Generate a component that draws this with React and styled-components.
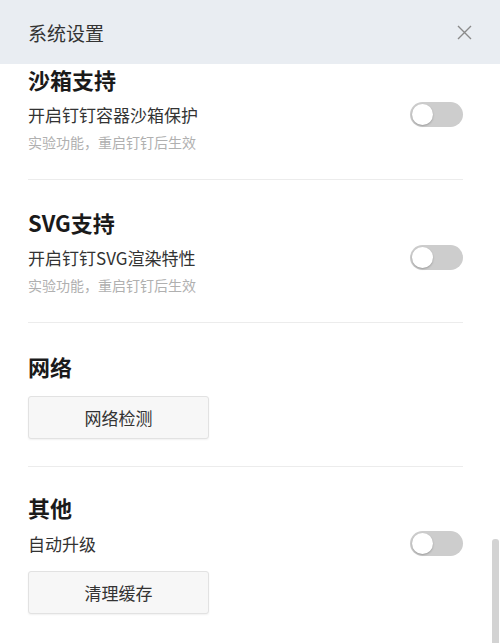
import React from 'react';
import styled, { createGlobalStyle } from 'styled-components';

const GlobalStyle = createGlobalStyle`
  html, body {
    margin: 0;
    padding: 0;
    background: #ffffff;
  }
  body {
    font-family: "Noto Sans CJK SC", "Noto Sans", sans-serif;
  }
`;

const Dialog = styled.div`
  width: 500px;
  height: 643px;
  display: flex;
  flex-direction: column;
  background: #ffffff;
  overflow: hidden;
`;

const Header = styled.div`
  height: 64px;
  flex-shrink: 0;
  display: flex;
  align-items: center;
  justify-content: space-between;
  padding: 0 24px 0 28px;
  background: #e9edf2;
  position: relative;
  z-index: 1;
`;

const Title = styled.div`
  font-size: 19px;
  color: #333333;
`;

const CloseButton = styled.button`
  width: 24px;
  height: 24px;
  padding: 0;
  border: none;
  background: transparent;
  display: flex;
  align-items: center;
  justify-content: center;
  color: #8a8a8a;
  cursor: pointer;
`;

const Body = styled.div`
  flex: 1;
  position: relative;
  overflow: hidden;
`;

// content is scrolled down a little, like in the screenshot
const Scroller = styled.div`
  margin-top: -27px;
  padding: 0 37px 0 28px;
`;

const Section = styled.div`
  padding: ${(p) => p.$top || 27}px 0 ${(p) => (p.$last ? 30 : 27)}px;
  border-bottom: ${(p) => (p.$last ? 'none' : '1px solid #ececec')};
`;

const Heading = styled.div`
  font-size: 22px;
  line-height: 30px;
  font-weight: 700;
  color: #1a1a1a;
`;

const Row = styled.div`
  margin-top: ${(p) => p.$gap || 6}px;
  height: 28px;
  display: flex;
  align-items: center;
  justify-content: space-between;
`;

const Label = styled.span`
  font-size: 17px;
  color: #333333;
`;

const Hint = styled.div`
  margin-top: 4px;
  font-size: 14px;
  line-height: 20px;
  color: #b0b0b0;
`;

const Toggle = styled.div`
  width: 53px;
  height: 25px;
  border-radius: 13px;
  background: #cdcdcd;
  position: relative;
  flex-shrink: 0;

  &::after {
    content: '';
    position: absolute;
    left: 2px;
    top: 2px;
    width: 21px;
    height: 21px;
    border-radius: 50%;
    background: #ffffff;
    box-shadow: 0 1px 2px rgba(0, 0, 0, 0.25);
  }
`;

const ActionButton = styled.button`
  display: block;
  margin-top: ${(p) => p.$gap || 16}px;
  width: 181px;
  height: 43px;
  border: 1px solid #e2e2e2;
  border-radius: 3px;
  background: #f7f7f7;
  box-shadow: 0 1px 2px rgba(0, 0, 0, 0.06);
  font-family: inherit;
  font-size: 17px;
  color: #333333;
  cursor: pointer;
`;

const ScrollThumb = styled.div`
  position: absolute;
  right: 1px;
  bottom: 0;
  width: 7px;
  height: 104px;
  border-radius: 3px 3px 0 0;
  background: #d3d3d3;
`;

const CloseIcon = () => (
  <svg width="15" height="15" viewBox="0 0 15 15" fill="none">
    <path d="M1 1L14 14M14 1L1 14" stroke="currentColor" strokeWidth="1.4" />
  </svg>
);

export default function App() {
  return (
    <>
      <GlobalStyle />
      <Dialog>
        <Header>
          <Title>系统设置</Title>
          <CloseButton>
            <CloseIcon />
          </CloseButton>
        </Header>
        <Body>
          <Scroller>
            <Section>
              <Heading>沙箱支持</Heading>
              <Row>
                <Label>开启钉钉容器沙箱保护</Label>
                <Toggle />
              </Row>
              <Hint>实验功能，重启钉钉后生效</Hint>
            </Section>
            <Section>
              <Heading>SVG支持</Heading>
              <Row>
                <Label>开启钉钉SVG渲染特性</Label>
                <Toggle />
              </Row>
              <Hint>实验功能，重启钉钉后生效</Hint>
            </Section>
            <Section $top={28}>
              <Heading>网络</Heading>
              <ActionButton $gap={15}>网络检测</ActionButton>
            </Section>
            <Section $last $top={25}>
              <Heading>其他</Heading>
              <Row $gap={7}>
                <Label>自动升级</Label>
                <Toggle />
              </Row>
              <ActionButton $gap={14}>清理缓存</ActionButton>
            </Section>
          </Scroller>
          <ScrollThumb />
        </Body>
      </Dialog>
    </>
  );
}
